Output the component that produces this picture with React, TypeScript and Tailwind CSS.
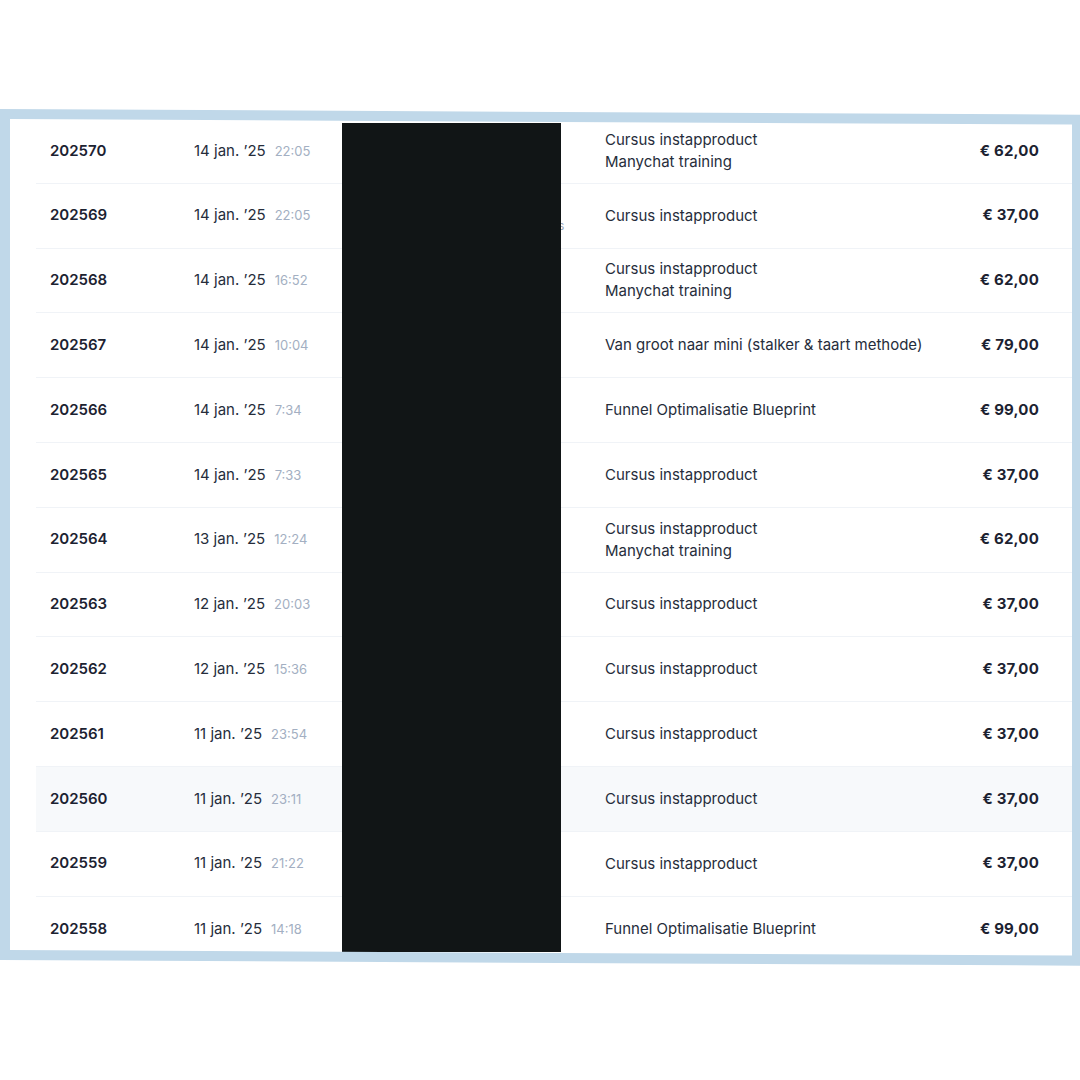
type Order = {
  id: string
  date: string
  time: string
  products: string[]
  price: string
  highlight?: boolean
  peek?: boolean
}

const orders: Order[] = [
  { id: '202570', date: '14 jan. ’25', time: '22:05', products: ['Cursus instapproduct', 'Manychat training'], price: '€ 62,00' },
  { id: '202569', date: '14 jan. ’25', time: '22:05', products: ['Cursus instapproduct'], price: '€ 37,00', peek: true },
  { id: '202568', date: '14 jan. ’25', time: '16:52', products: ['Cursus instapproduct', 'Manychat training'], price: '€ 62,00' },
  { id: '202567', date: '14 jan. ’25', time: '10:04', products: ['Van groot naar mini (stalker & taart methode)'], price: '€ 79,00' },
  { id: '202566', date: '14 jan. ’25', time: '7:34', products: ['Funnel Optimalisatie Blueprint'], price: '€ 99,00' },
  { id: '202565', date: '14 jan. ’25', time: '7:33', products: ['Cursus instapproduct'], price: '€ 37,00' },
  { id: '202564', date: '13 jan. ’25', time: '12:24', products: ['Cursus instapproduct', 'Manychat training'], price: '€ 62,00' },
  { id: '202563', date: '12 jan. ’25', time: '20:03', products: ['Cursus instapproduct'], price: '€ 37,00' },
  { id: '202562', date: '12 jan. ’25', time: '15:36', products: ['Cursus instapproduct'], price: '€ 37,00' },
  { id: '202561', date: '11 jan. ’25', time: '23:54', products: ['Cursus instapproduct'], price: '€ 37,00' },
  { id: '202560', date: '11 jan. ’25', time: '23:11', products: ['Cursus instapproduct'], price: '€ 37,00', highlight: true },
  { id: '202559', date: '11 jan. ’25', time: '21:22', products: ['Cursus instapproduct'], price: '€ 37,00' },
  { id: '202558', date: '11 jan. ’25', time: '14:18', products: ['Funnel Optimalisatie Blueprint'], price: '€ 99,00' },
]

function OrderRow({ order, last }: { order: Order; last: boolean }) {
  return (
    <div
      className={`flex h-[64.8px] items-center pr-[41px] ${last ? '' : 'border-b border-[#f0f3f7]'} ${order.highlight ? 'bg-[#f7f9fb]' : ''}`}
    >
      <div className="w-[158px] pl-[14px] text-[15px] font-semibold text-[#1c2231]">{order.id}</div>
      <div className="flex w-[148px] items-baseline">
        <span className="text-[15px] text-[#262d3b]">{order.date}</span>
        <span className="ml-[9px] text-[13px] text-[#a3afc2]">{order.time}</span>
      </div>
      <div className="relative h-full w-[263px]">
        {order.peek && <span className="absolute left-[216px] top-[33px] text-[12px] text-[#9aa6b8]">s</span>}
      </div>
      <div className="flex flex-1 flex-col text-[15px] leading-[22px] text-[#262d3b]">
        {order.products.map((p) => (
          <span key={p}>{p}</span>
        ))}
      </div>
      <div className="text-right text-[15px] font-bold tracking-[0.2px] text-[#1c2231]">{order.price}</div>
    </div>
  )
}

export default function App() {
  return (
    <div
      className="relative h-[1080px] w-[1080px] overflow-hidden bg-white"
      style={{ fontFamily: 'Inter, "Noto Sans", sans-serif' }}
    >
      <div className="ml-[36px] pt-[119px]">
        {orders.map((o, i) => (
          <OrderRow key={o.id} order={o} last={i === orders.length - 1} />
        ))}
      </div>

      {/* redacted column */}
      <div className="absolute left-[342px] top-[123px] h-[829px] w-[219px] bg-[#111516]" />

      {/* light blue frame */}
      <div className="absolute left-0 top-[109px] h-[851px] w-[1082px] origin-top-left skew-y-[0.3deg] border-[10px] border-[#c0d8e9]" />
      <div className="absolute bottom-0 left-0 right-0 top-[966px] bg-white" />
    </div>
  )
}
